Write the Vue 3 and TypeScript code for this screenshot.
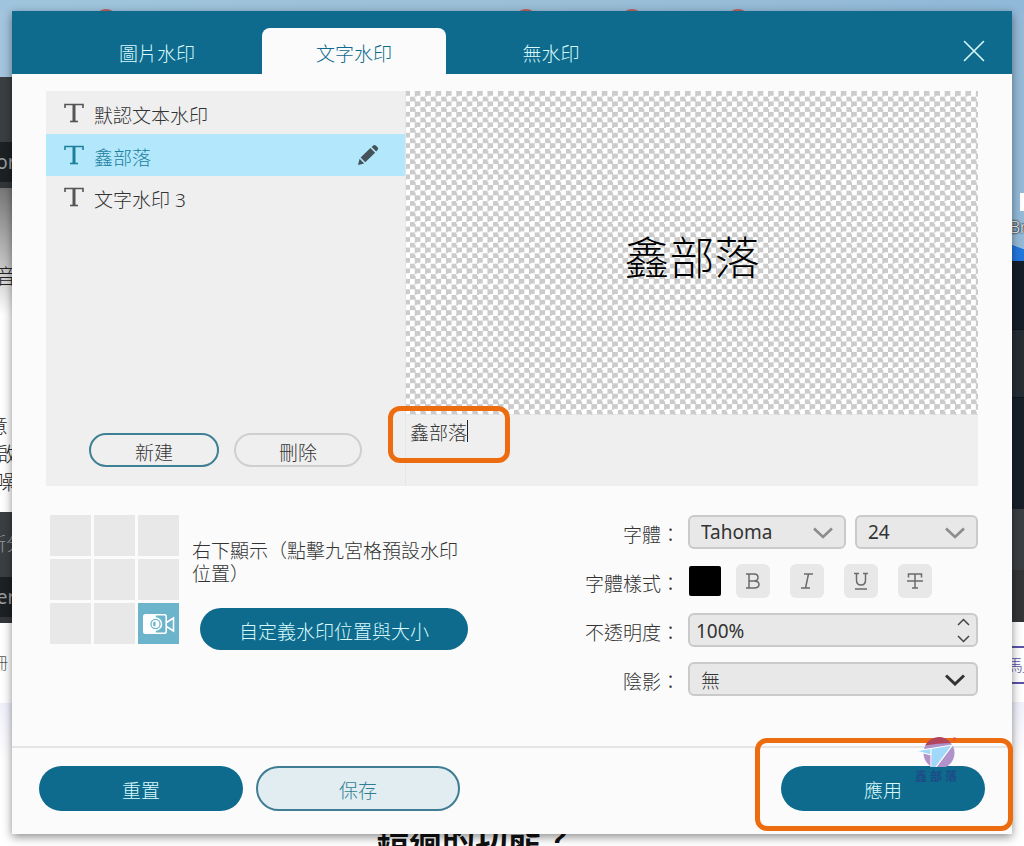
<script setup lang="ts">
import { ref } from 'vue'

interface Watermark {
  id: number
  name: string
}

const tabs = ['圖片水印', '文字水印', '無水印']
const activeTab = ref('文字水印')

const watermarks: Watermark[] = [
  { id: 1, name: '默認文本水印' },
  { id: 2, name: '鑫部落' },
  { id: 3, name: '文字水印 3' },
]
const selectedId = ref(2)

const text = ref('鑫部落')
const position = ref(9)
const font = ref('Tahoma')
const size = ref('24')
const opacity = ref(100)
const shadow = ref('無')

function stepOpacity(delta: number) {
  opacity.value = Math.min(100, Math.max(0, opacity.value + delta))
}
</script>

<template>
  <div class="screen">
    <div class="top-band" aria-hidden="true">
      <i class="dot d1"></i><i class="dot d2"></i><i class="dot d3"></i><i class="dot d4"></i>
    </div>

    <div class="strip left" aria-hidden="true">
      <div class="seg sky"></div>
      <div class="seg slate"></div>
      <div class="seg ink">or</div>
      <div class="seg fade"></div>
      <div class="seg glyph tall">音</div>
      <div class="seg glyph early">意</div>
      <div class="seg glyph">啟</div>
      <div class="seg glyph">噪</div>
      <div class="seg slate gap">新分</div>
      <div class="seg ink">er</div>
      <div class="seg page early">冊</div>
      <div class="seg haze"></div>
    </div>

    <main class="dialog">
      <header class="head">
        <nav class="tabs" role="tablist">
          <button
            v-for="t in tabs"
            :key="t"
            class="tab"
            :class="{ active: t === activeTab }"
            role="tab"
            type="button"
            :aria-selected="t === activeTab"
            @click="activeTab = t"
          >{{ t }}</button>
        </nav>
        <button class="close" type="button" aria-label="關閉">
          <svg width="24" height="24" viewBox="0 0 24 24" fill="none" stroke="#d8fafc" stroke-width="1.600" stroke-linecap="round">
            <path d="M2.500 2.500l19 19M21.500 2.500l-19 19" />
          </svg>
        </button>
      </header>

      <section class="body">
        <div class="editor">
          <div class="side">
            <ul class="list">
              <li v-for="w in watermarks" :key="w.id">
                <button class="item" :class="{ selected: w.id === selectedId }" type="button" @click="selectedId = w.id">
                  <svg class="tee" width="20" height="20" viewBox="0 0 20 20" fill="none" stroke="currentColor">
                    <path d="M1 5V1.500h18V5" stroke-width="1.600" />
                    <path d="M10 1v17" stroke-width="3" />
                    <path d="M6 18.500h8" stroke-width="1.600" />
                  </svg>
                  <span class="name">{{ w.name }}</span>
                  <svg v-if="w.id === selectedId" class="pencil" width="22" height="22" viewBox="0 0 22 22" fill="#45525a">
                    <path d="M1 21l1.600-6.200 4.600 4.600z" />
                    <path d="M3.600 13.400L13.400 4l4.700 4.700-9.800 9.600z" />
                    <path d="M14.600 2.900l1.600-1.500q1.300-1 2.600.2l1.700 1.700q1.200 1.300.1 2.600l-1.400 1.500z" />
                  </svg>
                </button>
              </li>
            </ul>
            <div class="side-actions">
              <button class="pill outline teal" type="button">新建</button>
              <button class="pill outline grey" type="button">刪除</button>
            </div>
          </div>
          <div class="stage">
            <div class="preview">{{ text }}</div>
            <div class="entry">
              <textarea v-model="text" class="entry-text" rows="1" aria-label="水印文字"></textarea>
              <i class="caret"></i>
              <i class="mark mark-entry"></i>
            </div>
          </div>
        </div>

        <div class="options">
          <div class="placing">
            <div class="nine">
              <button
                v-for="n in 9"
                :key="n"
                class="cell"
                :class="{ on: n === position }"
                type="button"
                :aria-label="'位置 ' + n"
                @click="position = n"
              >
                <svg v-if="n === position" width="32" height="20" viewBox="0 0 32 20" fill="none" stroke="#fff" stroke-width="1.600">
                  <path d="M12 .8H2.500Q.8.8.8 2.500v15q0 1.700 1.700 1.700H12z" fill="#fff" />
                  <path d="M12 .8h9.500q1.700 0 1.700 1.700v15q0 1.700-1.700 1.700H12" />
                  <path d="M23.500 8.500L30.500 4v13l-7-4.500" />
                  <circle cx="12.500" cy="10" r="6" fill="#6bb4cc" stroke="#fff" />
                  <circle cx="12.500" cy="10" r="3.200" stroke-width="1.400" />
                  <path d="M12.500 7a3 3 0 0 1 0 6z" fill="#fff" stroke="none" />
                </svg>
              </button>
            </div>
            <div class="placing-info">
              <p class="hint">右下顯示（點擊九宮格預設水印位置）</p>
              <button class="pill solid custom" type="button">自定義水印位置與大小</button>
            </div>
          </div>

          <div class="form">
            <label class="label" for="font">字體：</label>
            <div class="field pair">
              <div class="box font-box">
                <select id="font" v-model="font" class="control">
                  <option>Tahoma</option>
                </select>
                <svg class="chevron soft" width="20" height="12" viewBox="0 0 20 12" fill="none" stroke="currentColor" stroke-width="2.600"><path d="M1 1.500l9 8.500 9-8.500" /></svg>
              </div>
              <div class="box">
                <select v-model="size" class="control" aria-label="字號">
                  <option>24</option>
                </select>
                <svg class="chevron soft" width="20" height="12" viewBox="0 0 20 12" fill="none" stroke="currentColor" stroke-width="2.600"><path d="M1 1.500l9 8.500 9-8.500" /></svg>
              </div>
            </div>

            <span id="style-label" class="label">字體樣式：</span>
            <div class="field styles" role="group" aria-labelledby="style-label">
              <button class="swatch" type="button" aria-label="顏色"></button>
              <button class="style-btn" type="button" aria-label="粗體">
                <svg width="18" height="18" viewBox="0 0 18 18"><path d="M2 2h8q4 0 4 3.500T10 9H5M10 9q5 0 5 3.500T10 16H2M5 2v14" /></svg>
              </button>
              <button class="style-btn" type="button" aria-label="斜體">
                <svg width="18" height="18" viewBox="0 0 18 18"><path d="M6 2h9M3 16h9M10.500 2l-3 14" /></svg>
              </button>
              <button class="style-btn" type="button" aria-label="底線">
                <svg width="18" height="18" viewBox="0 0 18 18"><path d="M2 1.500h5M11 1.500h5M4.500 1.500V8q0 5 4.500 5t4.500-5V1.500M3 17h12" /></svg>
              </button>
              <button class="style-btn" type="button" aria-label="刪除線">
                <svg width="18" height="18" viewBox="0 0 18 18"><path d="M2.500 5.500V2h13v3.500M9 2v14M6 16h6M1 9h16" /></svg>
              </button>
            </div>

            <label class="label" for="opacity">不透明度：</label>
            <div class="field box">
              <input id="opacity" class="control near" type="text" :value="opacity + '%'" />
              <div class="spin">
                <button type="button" aria-label="增加" @click="stepOpacity(1)">
                  <svg width="13" height="8" viewBox="0 0 13 8"><path d="M1 7l5.500-5.500L12 7" /></svg>
                </button>
                <button type="button" aria-label="減少" @click="stepOpacity(-1)">
                  <svg width="13" height="8" viewBox="0 0 13 8"><path d="M1 1l5.500 5.500L12 1" /></svg>
                </button>
              </div>
            </div>

            <label class="label" for="shadow">陰影：</label>
            <div class="field box">
              <select id="shadow" v-model="shadow" class="control">
                <option>無</option>
              </select>
              <svg class="chevron" width="20" height="12" viewBox="0 0 20 12" fill="none" stroke="currentColor" stroke-width="3"><path d="M1 1.500l9 8.500 9-8.500" /></svg>
            </div>
          </div>
        </div>
      </section>

      <footer class="foot">
        <button class="pill solid big" type="button">重置</button>
        <button class="pill pale big" type="button">保存</button>
        <div class="apply">
          <button class="pill solid big" type="button">應用</button>
          <i class="mark mark-apply"></i>
          <div class="logo" aria-hidden="true">
            <svg width="44" height="30" viewBox="0 0 44 30">
              <circle cx="24" cy="16" r="15.500" fill="#b093cb" />
              <path d="M10 8.500A15.500 15.500 0 0 1 36 6q-14 0-26 2.500z" fill="#b2455c" />
              <circle cx="39.500" cy="2" r="1.800" fill="#e8573a" />
              <path d="M0 14l15-2.500L38 8 21 30h-4V18z" fill="#9fd8f8" />
              <path d="M16 11.500V30M0 14l16-2.500L37.500 8 21 30M16 18L1 14" fill="none" stroke="#fff" stroke-width="1.200" />
            </svg>
            <div class="logo-text"><span>鑫</span><span>部</span><span>落</span></div>
          </div>
        </div>
      </footer>
    </main>

    <div class="strip right" aria-hidden="true">
      <div class="seg r-sky"></div>
      <div class="seg r-icon"></div>
      <div class="seg r-name">Br</div>
      <div class="seg r-wave"></div>
      <div class="seg r-navy"></div>
      <div class="seg r-steel"></div>
      <div class="seg r-deep"></div>
      <div class="seg r-slate"></div>
      <div class="seg r-coal"></div>
      <div class="seg r-page"></div>
      <div class="seg r-link">馬_</div>
      <div class="seg r-blank"></div>
      <div class="seg haze"></div>
    </div>

    <div class="bottom-band" aria-hidden="true">錯過的功能？</div>
  </div>
</template>

<style>
html,
body {
  margin: 0;
  background: #fff;
}
</style>

<style scoped>
* {
  box-sizing: border-box;
}
.screen {
  display: grid;
  grid-template: 11px 1fr 12px / 12px minmax(0, 1fr) 12px;
  min-height: 100vh;
  overflow: hidden;
  font: 300 19px/23px "Noto Sans", "Noto Sans CJK TC", sans-serif;
  color: #333;
}
button,
input,
select,
textarea {
  font: inherit;
  color: inherit;
  margin: 0;
  padding: 0;
  border: 0;
  background: none;
}
button {
  cursor: pointer;
}

/* Desktop behind the dialog */
.top-band {
  grid-column: 1 / -1;
  position: relative;
  overflow: hidden;
  background: linear-gradient(90deg, #9fc5de, #9bbfd7 50%, #90b8d8);
}
.dot {
  position: absolute;
  top: 9px;
  width: 24px;
  height: 24px;
  border-radius: 50%;
  background: #c0605c;
}
.d1 { left: 94px; }
.d2 { left: 514px; }
.d3 { left: 620px; }
.d4 { left: 726px; }
.strip {
  display: flex;
  flex-direction: column;
  overflow: hidden;
}
.seg {
  flex: none;
  display: flex;
  align-items: center;
  justify-content: center;
  overflow: hidden;
  white-space: nowrap;
}
.sky { height: 66px; background: #a3c5de; }
.slate { height: 65px; background: #3b3f42; color: #9a9ea1; }
.ink {
  height: 46px;
  background: #1e2124;
  border-bottom: 6px solid #34373a;
  color: #9a9ea1;
  font-weight: 400;
}
.fade { height: 77px; background: linear-gradient(#777, #c4c4c4); }
.glyph { height: 28px; font-size: 20px; color: #222; }
.early { justify-content: flex-end; padding-right: 4px; }
.tall {
  height: 147px;
  align-items: flex-start;
  background: linear-gradient(#c4c4c4, #fff 50px);
}
.gap { margin-top: 16px; }
.page { height: 80px; color: #555; font-size: 16px; }
.haze { flex: 1; background: linear-gradient(#f0f0fb, #fff 60px); }
.r-sky { height: 182px; background: #94bad8; }
.r-icon { height: 22px; border: solid #94bad8; border-width: 0 0 4px 8px; background: #fff; }
.r-name {
  height: 24px;
  background: #94bad8;
  color: #fff;
  font-size: 16px;
  text-shadow: 0 0 2px #000, 0 0 2px #000;
}
.r-wave { height: 22px; background: linear-gradient(20deg, #2277dd 60%, #94bad8 62%); }
.r-navy { height: 68px; background: #151e28; }
.r-steel { height: 69px; background: #252d33; border: solid #0e151c; border-width: 1px 0; }
.r-deep { height: 111px; background: #172029; }
.r-slate { height: 61px; background: #3b3f42; }
.r-coal { height: 52px; background: #343537; }
.r-page { height: 24px; }
.r-link { height: 38px; border: solid #5a52a8; border-width: 2px 0; color: #5a52a8; font-size: 16px; }
.r-blank { height: 18px; }
.bottom-band {
  grid-column: 1 / -1;
  overflow: hidden;
  padding-left: 376px;
  font-size: 33px;
  font-weight: 700;
  line-height: 10px;
  color: #111;
}

/* Dialog */
.dialog {
  position: relative;
  display: flex;
  flex-direction: column;
  background: #fbfbfb;
  box-shadow: 0 3px 9px rgba(0, 0, 0, 0.45);
}
.head {
  display: flex;
  align-items: flex-end;
  justify-content: space-between;
  height: 63px;
  padding: 0 24px 0 40px;
  background: #0f6b8d;
}
.tabs {
  display: flex;
}
.tab {
  width: 210px;
  height: 46px;
  padding-top: 7px;
  color: #d8fafc;
}
.tab.active {
  width: 184px;
  border-radius: 8px 8px 0 0;
  background: #fbfbfb;
  color: #0f6b8d;
}
.close {
  align-self: center;
  width: 26px;
  height: 24px;
  margin-bottom: -16px;
}
.close svg {
  display: block;
}
.body {
  flex: 1;
  padding: 17px 34px 0;
}
.editor {
  display: flex;
  height: 395px;
  background: #efefef;
}
.side {
  display: flex;
  flex-direction: column;
  justify-content: space-between;
  flex: 0 0 360px;
  padding-bottom: 19px;
  border-right: 1px solid #e4e6ea;
}
.list {
  margin: 0;
  padding: 1px 0 0;
  list-style: none;
}
.item {
  display: flex;
  align-items: center;
  gap: 10px;
  width: 100%;
  height: 42px;
  padding: 0 26px 0 18px;
  text-align: left;
}
.tee {
  color: #555;
}
.item.selected,
.selected .tee {
  color: #1c809c;
}
.item.selected {
  background: #b3e8fc;
}
.name {
  flex: 1;
  padding-top: 6px;
}
.side-actions {
  display: flex;
  gap: 15px;
  padding-left: 43px;
}
.pill {
  border-radius: 23px;
  padding-top: 6px;
  text-align: center;
}
.outline {
  width: 130px;
  height: 34px;
  border: 2px solid #3f8094;
}
.outline.grey {
  width: 128px;
  border-color: #cdcfd0;
}
.solid {
  background: #0f6b8d;
  color: #d8fafc;
}
.pale {
  border: 2px solid #3f7d93;
  background: #e1edf1;
  color: #2f7f93;
}
.stage {
  flex: 1;
  display: flex;
  flex-direction: column;
}
.preview {
  flex: 1;
  display: flex;
  align-items: center;
  justify-content: center;
  padding-top: 10px;
  background: conic-gradient(#cbcbcb 25%, #fff 0 50%, #cbcbcb 0 75%, #fff 0) 4px 0 /
    calc(100% / 55) calc(100% / 31);
  font-size: 45px;
  line-height: 56px;
  color: #000;
}
.entry {
  position: relative;
  height: 71px;
  padding: 7px 4px;
}
.entry-text {
  display: block;
  width: 100%;
  height: 28px;
  resize: none;
  outline: 0;
  overflow: hidden;
}
.caret {
  position: absolute;
  left: 61px;
  top: 5px;
  width: 1px;
  height: 22px;
  background: #222;
}
.mark {
  position: absolute;
  z-index: 2;
  border: 5px solid #ed6c10;
  border-radius: 12px;
  pointer-events: none;
}
.mark-entry {
  left: -18px;
  top: -9px;
  width: 122px;
  height: 57px;
}

/* Options */
.options {
  display: flex;
  justify-content: space-between;
  padding: 29px 0 0 4px;
}
.placing {
  display: flex;
  gap: 13px;
}
.nine {
  display: grid;
  grid-template-columns: repeat(3, 41px);
  grid-auto-rows: 41px;
  gap: 3px;
}
.cell {
  display: flex;
  align-items: center;
  justify-content: center;
  background: #e8e8e8;
}
.cell.on {
  background: #6bb4cc;
}
.placing-info {
  width: 276px;
  padding-top: 25px;
}
.hint {
  margin: 0 0 22px;
}
.custom {
  width: 268px;
  height: 42px;
  margin-left: 8px;
}
.form {
  display: grid;
  grid-template-columns: auto 290px;
  grid-auto-rows: 34px;
  gap: 15px 8px;
}
.label {
  display: flex;
  align-items: center;
  justify-content: flex-end;
  padding-top: 6px;
}
.pair {
  display: grid;
  grid-template-columns: 158px 1fr;
  gap: 9px;
}
.box {
  position: relative;
  display: flex;
  border: 2px solid #cacaca;
  border-radius: 6px;
  background: #e8e8e8;
}
.control {
  flex: 1;
  width: 100%;
  min-width: 0;
  padding: 1px 11px 0;
  appearance: none;
  outline: 0;
  font-weight: 400;
}
.control.near {
  padding: 2px 6px 0;
}
#shadow {
  padding-top: 5px;
  font-weight: 300;
}
.chevron {
  position: absolute;
  right: 11px;
  top: 10px;
  color: #333;
  pointer-events: none;
}
.soft {
  color: #8c8c8c;
}
.spin {
  display: flex;
  flex-direction: column;
  justify-content: space-between;
  padding: 3px 6px 2px;
}
.spin button {
  display: flex;
}
.spin path {
  fill: none;
  stroke: #444;
  stroke-width: 1.5;
}
.styles {
  display: flex;
  align-items: center;
  gap: 20px;
}
.swatch {
  width: 32px;
  height: 30px;
  margin: 0 -5px 0 1px;
  border-radius: 2px;
  background: #000;
}
.style-btn {
  display: flex;
  align-items: center;
  justify-content: center;
  width: 34px;
  height: 34px;
  border-radius: 6px;
  background: #e8e8e8;
}
.style-btn path {
  fill: none;
  stroke: #6b6b6b;
  stroke-width: 1.5;
}

/* Footer */
.foot {
  display: flex;
  gap: 13px;
  padding: 18px 27px 23px;
  border-top: 2px solid #e4e5e5;
}
.big {
  width: 204px;
  height: 45px;
}
.apply {
  position: relative;
  margin-left: auto;
}
.mark-apply {
  inset: -28px -28px -20px -26px;
}
.logo {
  position: absolute;
  z-index: 3;
  right: 26px;
  top: -29px;
  display: flex;
  flex-direction: column;
  align-items: flex-start;
  pointer-events: none;
}
.logo-text {
  display: flex;
  gap: 3px;
  font-size: 12px;
  font-weight: 700;
  line-height: 20px;
  color: #1d4b86;
}
</style>
